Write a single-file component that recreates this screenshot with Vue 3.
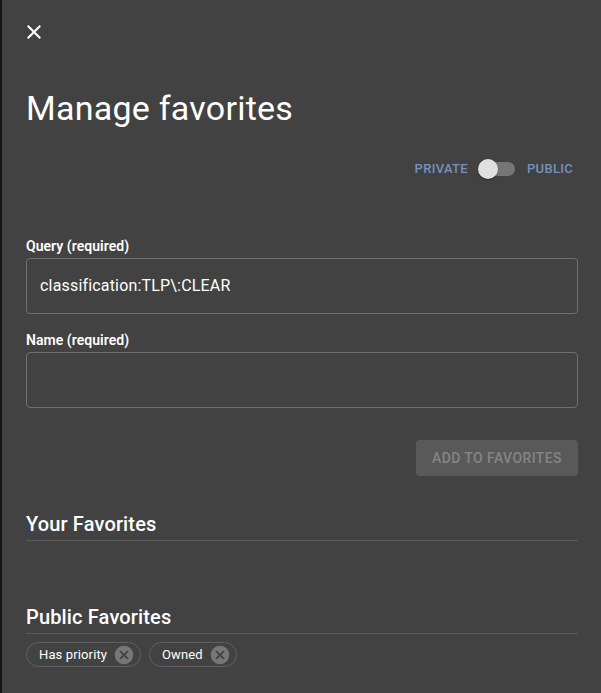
<script setup>
import { ref } from 'vue'
const query = ref('classification:TLP\\:CLEAR')
const name = ref('')
const favorites = ['Has priority', 'Owned']
</script>

<template>
  <main class="drawer">
    <button class="close" aria-label="Close">
      <svg viewBox="0 0 24 24"><path d="M19 6.41 17.59 5 12 10.59 6.41 5 5 6.41 10.59 12 5 17.59 6.41 19 12 13.41 17.59 19 19 17.59 13.41 12z" /></svg>
    </button>
    <h1>Manage favorites</h1>
    <div class="visibility">
      <span>PRIVATE</span>
      <div class="switch"><i class="thumb"></i></div>
      <span>PUBLIC</span>
    </div>
    <label class="field">
      <span>Query (required)</span>
      <input v-model="query" />
    </label>
    <label class="field">
      <span>Name (required)</span>
      <input v-model="name" />
    </label>
    <button class="add" disabled>ADD TO FAVORITES</button>
    <section class="yours"><h2>Your Favorites</h2></section>
    <section>
      <h2>Public Favorites</h2>
      <div class="chips">
        <div v-for="f in favorites" :key="f" class="chip">
          <span>{{ f }}</span>
          <svg viewBox="0 0 24 24"><path d="M12 2C6.47 2 2 6.47 2 12s4.47 10 10 10 10-4.47 10-10S17.53 2 12 2zm5 13.59L15.59 17 12 13.41 8.41 17 7 15.59 10.59 12 7 8.41 8.41 7 12 10.59 15.59 7 17 8.41 13.41 12 17 15.59z" /></svg>
        </div>
      </div>
    </section>
  </main>
</template>

<style>
body { background: #424242; }
</style>

<style scoped>
* { box-sizing: border-box; }
.drawer {
  display: flex;
  flex-direction: column;
  height: 693px;
  padding: 20px 23px 0 24px;
  border-left: 2px solid #151515;
  background: #424242;
  color: #fff;
  font-family: Roboto, sans-serif;
  overflow: hidden;
}
button { border: 0; background: none; font: inherit; }
.close { width: 24px; height: 24px; margin-left: -4px; padding: 0; }
.close svg { display: block; width: 24px; height: 24px; fill: #fff; }
h1 { margin: 43px 0 0; font-size: 34px; font-weight: 400; line-height: 42px; letter-spacing: 0.25px; }
.visibility {
  display: flex;
  align-items: center;
  justify-content: flex-end;
  height: 38px;
  margin-top: 21px;
  padding-right: 4px;
  color: #7790bd;
  font-size: 13px;
  font-weight: 500;
  letter-spacing: 0.32px;
}
.visibility span { padding-bottom: 2px; }
.visibility span:last-child { width: 47px; }
.switch {
  display: flex;
  align-items: center;
  width: 34px;
  height: 14px;
  margin: 0 12px 0 13px;
  border-radius: 7px;
  background: #767676;
}
.thumb {
  flex: none;
  width: 20px;
  height: 20px;
  margin-left: -3px;
  border-radius: 50%;
  background: #e0e0e0;
  box-shadow: 0 2px 1px -1px #0003, 0 1px 1px #0002, 0 1px 3px #0002;
}
.field { display: block; height: 94px; }
.visibility + .field { margin-top: 48px; }
.field span { display: block; height: 22px; font-size: 14px; font-weight: 600; line-height: 20px; letter-spacing: 0.04px; }
input {
  display: block;
  width: 100%;
  height: 56px;
  padding: 0 13px 2px;
  border: 1px solid #6f6f6f;
  border-radius: 4px;
  outline: 0;
  background: transparent;
  color: #fff;
  font: 400 16px Roboto, sans-serif;
  letter-spacing: 0.18px;
}
.add {
  align-self: flex-end;
  width: 162px;
  height: 36px;
  margin-top: 16px;
  padding: 0;
  border-radius: 4px;
  background: #595959;
  color: #858585;
  font-size: 14px;
  font-weight: 500;
  letter-spacing: 0.4px;
}
.yours { height: 93px; margin-top: 32px; }
h2 {
  height: 33px;
  margin: 0;
  border-bottom: 1px solid #5b5b5b;
  font-size: 20px;
  font-weight: 500;
  line-height: 32px;
  letter-spacing: 0.15px;
}
.chips { display: flex; gap: 8px; padding-top: 8px; }
.chip {
  display: flex;
  align-items: center;
  justify-content: space-between;
  width: 115px;
  height: 25px;
  padding: 0 5px 0 12px;
  border: 1px solid #616161;
  border-radius: 13px;
  font-size: 13px;
  letter-spacing: 0.13px;
  white-space: nowrap;
}
.chip:last-child { width: 88px; }
.chip svg { width: 22px; height: 22px; fill: #777; }
</style>
